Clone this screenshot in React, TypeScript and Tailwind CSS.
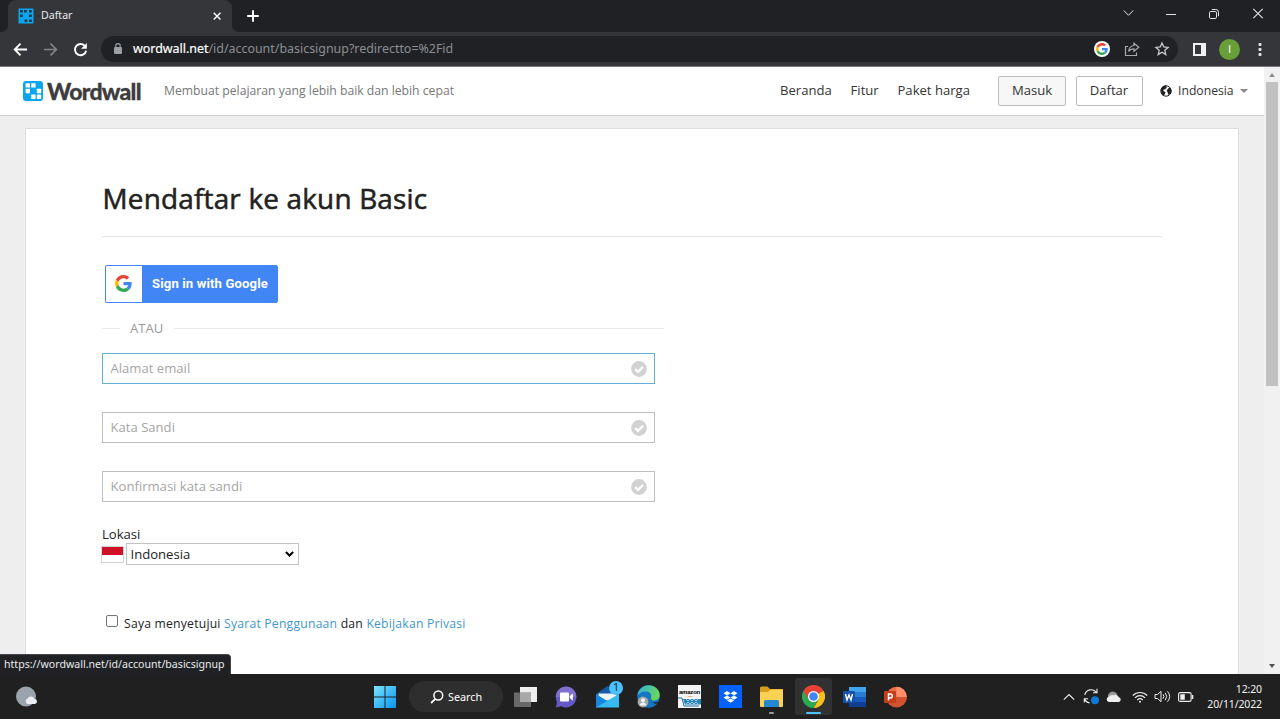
import { ReactNode } from 'react'

function Mark({ className, hole, round }: { className: string; hole: string; round: number }) {
  return (
    <svg className={className} viewBox="0 0 20 20">
      <rect width="20" height="20" rx={round} fill="#0aa5ec" />
      {[[2.6, 2.2], [8.2, 2.2], [2.6, 7.8], [13.8, 7.8], [8.2, 13.6], [13.8, 13.6]].map(([x, y], i) => (
        <rect key={i} x={x} y={y} width="4.4" height="4.4" rx=".4" fill={hole} />
      ))}
    </svg>
  )
}

function TabMark() {
  return (
    <svg className="size-4" viewBox="0 0 16 16">
      <path d="M.5.5h15v15H.5z" fill="#0aa5ec" />
      {[[2, 2], [6, 2], [11, 2], [2, 6.5], [11, 6.5], [6.5, 11.5], [11, 11.5]].map(([x, y], i) => (
        <rect key={i} x={x} y={y} width="2.8" height="2.5" fill="#263746" />
      ))}
    </svg>
  )
}

function GoogleG({ className }: { className: string }) {
  return (
    <svg className={className} viewBox="0 0 48 48">
      <path fill="#EA4335" d="M24 9.5c3.54 0 6.71 1.22 9.21 3.6l6.85-6.85C35.9 2.38 30.47 0 24 0 14.62 0 6.51 5.38 2.56 13.22l7.98 6.19C12.43 13.72 17.74 9.5 24 9.5z" />
      <path fill="#4285F4" d="M46.98 24.55c0-1.57-.15-3.09-.38-4.55H24v9.02h12.94c-.58 2.96-2.26 5.48-4.78 7.18l7.73 6c4.51-4.18 7.09-10.36 7.09-17.65z" />
      <path fill="#FBBC05" d="M10.53 28.59A14.5 14.5 0 0 1 9.77 24c0-1.6.27-3.14.76-4.59l-7.98-6.19A23.9 23.9 0 0 0 0 24c0 3.88.92 7.54 2.56 10.78l7.97-6.19z" />
      <path fill="#34A853" d="M24 48c6.48 0 11.93-2.13 15.89-5.81l-7.73-6c-2.15 1.45-4.92 2.3-8.16 2.3-6.26 0-11.57-4.22-13.47-9.91l-7.98 6.19C6.51 42.62 14.62 48 24 48z" />
    </svg>
  )
}

function Line({ className, box = '0 0 16 16', children }: { className: string; box?: string; children: ReactNode }) {
  return <svg className={`shrink-0 ${className}`} viewBox={box} fill="none" stroke="currentColor">{children}</svg>
}

function TabBar() {
  return (
    <div className="flex h-8 items-start bg-[#202124] text-white">
      <span className="h-8 w-2 bg-[#35363a]"><span className="block h-8 rounded-br-[7px] bg-[#202124]" /></span>
      <div className="flex h-8 w-[224px] items-center rounded-t-[8px] bg-[#35363a] pr-[9px] pl-[10px]">
        <TabMark />
        <span className="ml-[7px] grow font-['Noto_Sans',sans-serif] text-[10.6px] text-[#e8eaed]">Daftar</span>
        <Line className="size-3" box="0 0 12 12"><path d="M2.7 2.7l6.8 6.8M9.5 2.7L2.7 9.5" strokeWidth="1.4" /></Line>
      </div>
      <span className="h-8 w-2 bg-[#35363a]"><span className="block h-8 rounded-bl-[7px] bg-[#202124]" /></span>
      <Line className="ml-[7px] h-8 w-3" box="0 0 12 32"><path d="M6 10.2v11.6M.2 16h11.6" strokeWidth="1.9" /></Line>
      <div className="ml-auto flex h-[27px] items-center text-[#e4e4e4]">
        <Line className="mr-[31px] size-3" box="0 0 12 12"><path d="M.8 2.5L5.5 7.3l4.7-4.8" /></Line>
        <Line className="mr-[31px] size-3" box="0 0 12 12"><path d="M0 6.5h10" /></Line>
        <Line className="mr-[31px] size-3" box="0 0 12 12"><rect x=".5" y="3.5" width="7" height="7" rx="1.3" /><path d="M2.8 1.5h4a2.7 2.7 0 0 1 2.7 2.7v4" /></Line>
        <Line className="mr-4 size-3" box="0 0 12 12"><path d="M1.3 .8l9.4 9.4M10.7 .8l-9.4 9.4" strokeWidth="1.1" /></Line>
      </div>
    </div>
  )
}

function Toolbar() {
  return (
    <div className="flex h-[35px] items-center border-b border-[#77787b] bg-[#35363a] text-white">
      <Line className="ml-[13px] size-[15px]"><path d="M15 8H2M8 1.8L1.8 8 8 14.2" strokeWidth="2" /></Line>
      <Line className="ml-[15px] size-[15px] text-[#818387]"><path d="M1 8h13M8 1.8L14.2 8 8 14.2" strokeWidth="1.8" /></Line>
      <Line className="ml-[15px] size-[15px]"><path d="M13 4.6A6 6 0 1 0 14 9.4" strokeWidth="2" /><path d="M14.8 1v6.3H8.5z" fill="currentColor" stroke="none" /></Line>
      <div className="ml-[13px] flex h-[26px] w-[1077px] items-center rounded-full bg-[#202124] pr-[8px] pl-[13px]">
        <svg className="mb-px h-[11px] w-[8px]" viewBox="0 0 8 11"><rect y="4" width="8" height="7" rx="1" fill="#9aa0a6" /><path d="M1.8 4.5V2.8a2.2 2.2 0 0 1 4.4 0v1.7" fill="none" stroke="#9aa0a6" strokeWidth="1.2" /></svg>
        <p className="ml-[11px] grow font-['Noto_Sans',sans-serif] text-[12.43px] leading-[18px] text-[#8b8f94]"><span className="text-white [-webkit-text-stroke:0.2px_white]">wordwall.net</span>/id/account/basicsignup?redirectto=%2Fid</p>
        <span className="flex size-4 items-center justify-center rounded-full bg-white"><GoogleG className="size-3" /></span>
        <Line className="ml-[14px] size-4 text-[#a6a9ad]"><path d="M4 5.5H1.5v9h11v-3" strokeWidth="1.2" /><path d="M10 2.2L14.8 6.2 10 10.2V7.8c-2.6 0-4.2.8-5.4 2.6.3-3.2 2.2-5.5 5.4-5.9z" strokeWidth="1.2" /></Line>
        <Line className="ml-[14px] size-4 text-[#c8cacd]"><path d="M8 2l1.8 4 4.3.4-3.3 2.9 1 4.3L8 11.3l-3.8 2.3 1-4.3-3.3-2.9 4.3-.4z" strokeWidth="1.3" /></Line>
      </div>
      <svg className="ml-[15px] h-[13px] w-[13px]" viewBox="0 0 13 13"><rect width="13" height="13" fill="#f1f1f1" /><rect x="2" y="2" width="6" height="9" fill="#35363a" /></svg>
      <span className="ml-[13px] flex size-[21px] items-center justify-center rounded-full bg-[#689f38] font-['Roboto',sans-serif] text-[10px]">I</span>
      <svg className="ml-[18px] h-[13px] w-[4px]" viewBox="0 0 4 13" fill="#e4e4e4"><rect x=".5" y="0" width="3" height="3" rx="1" /><rect x=".5" y="5" width="3" height="3" rx="1" /><rect x=".5" y="10" width="3" height="3" rx="1" /></svg>
    </div>
  )
}

function SiteHeader() {
  return (
    <header className="flex h-[49px] shrink-0 items-center border-b border-[#cfcfcf] bg-white text-[13.1px] text-[#333]">
      <Mark className="ml-[23px] size-5" hole="#ffffff" round={3} />
      <span className="ml-[4px] w-[94px] font-['Lato',sans-serif] text-[23px] leading-6 font-black tracking-[-0.72px] text-[#3d3d3d] [-webkit-text-stroke:0.3px_#3d3d3d]">Wordwall</span>
      <span className="ml-[23px] text-[12.2px] text-[#777]">Membuat pelajaran yang lebih baik dan lebih cepat</span>
      <nav className="ml-auto flex w-[190px] justify-between whitespace-nowrap"><span>Beranda</span><span>Fitur</span><span>Paket harga</span></nav>
      <button className="ml-[28px] h-[30px] w-[68px] rounded-[2px] border border-[#bdbdbd] bg-[#f7f7f7]">Masuk</button>
      <button className="ml-[10px] h-[30px] w-[67px] rounded-[2px] border border-[#bdbdbd] bg-white pr-px">Daftar</button>
      <svg className="ml-[17px] size-3" viewBox="0 0 12 12"><circle cx="6" cy="6" r="5.2" fill="#fff" stroke="#222" /><path d="M.8 4L3 1l3-.5.8 2-1.5 1.7-2 .6.3 1.500 2 .8-.7 2-1.500 2L1.500 9zM8 3.500L10 2.500l1.500 3-.7 3L8.500 10 7.500 7 6.700 5.500z" fill="#222" /></svg>
      <span className="ml-[6px] w-[56px] text-[12.2px]">Indonesia</span>
      <svg className="mr-4 ml-[6px] h-1 w-2" viewBox="0 0 8 4"><path d="M0 0h8L4 4z" fill="#888" /></svg>
    </header>
  )
}

function Field({ label, active = false }: { label: string; active?: boolean }) {
  return (
    <div className={`flex h-[31px] w-[553px] items-center justify-between border bg-white pr-[7px] pl-[7.5px] ${active ? 'border-[#62b0d4]' : 'border-[#bfbfbf]'}`}>
      <span className="text-[13.1px] text-[#a6a6a6]">{label}</span>
      <svg className="size-4" viewBox="0 0 16 16"><circle cx="8" cy="8" r="7.9" fill="#d2d2d2" /><path d="M4.2 8.2l2.8 2.7 5-5" fill="none" stroke="#fff" strokeWidth="2.4" /></svg>
    </div>
  )
}

function SignupCard() {
  return (
    <main className="mt-[12px] ml-[25px] h-[560px] w-[1214px] border border-[#dedede] bg-white pl-[76px] text-[#222]">
      <h1 className="mt-[47px] h-[45px] pl-[0.5px] text-[27.9px] leading-[44px] tracking-[0.2px] text-[#222] [-webkit-text-stroke:0.55px_#222]">Mendaftar ke akun Basic</h1>
      <div className="mt-[15px] w-[1060px] border-t border-[#e6e6e6]" />
      <button className="mt-[28px] ml-[3px] flex h-[38px] w-[173px] items-center rounded-[2px] border border-[#4285f4] bg-[#4285f4]">
        <span className="flex h-[36px] w-[36px] items-center justify-center rounded-l-[1px] bg-white pr-px"><GoogleG className="mb-px size-[17px]" /></span>
        <span className="ml-[10px] font-['Roboto',sans-serif] text-[13.1px] font-bold tracking-[0.13px] whitespace-nowrap text-white">Sign in with Google</span>
      </button>
      <div className="mt-[15px] flex h-[20px] w-[562px] items-center text-[13.1px] text-[#999]">
        <span className="w-[18px] border-t border-[#e8e8e8]" /><span className="mx-[10px] w-[34px] pt-[2px]">ATAU</span><span className="grow border-t border-[#e8e8e8]" />
      </div>
      <div className="mt-[15px] flex flex-col gap-[28px]"><Field label="Alamat email" active /><Field label="Kata Sandi" /><Field label="Konfirmasi kata sandi" /></div>
      <div className="mt-[23px] h-[18px] text-[13.1px] leading-[18px]">Lokasi</div>
      <div className="flex items-center">
        <span className="-ml-px flex h-[17px] w-[23px] flex-col border border-[#d4d4d4] bg-white"><span className="h-[8px] bg-[#ce1126]" /></span>
        <span className="ml-[2px] flex h-[22px] w-[173px] items-center justify-between border border-[#c3c3c3] pr-[4px] pl-[3.5px] text-[13.1px]"><span className="pt-px">Indonesia</span>
          <Line className="h-[6px] w-[9px] text-black" box="0 0 9 6"><path d="M.9 1l3.6 3.5L8.1 1" strokeWidth="2" /></Line>
        </span>
      </div>
      <div className="mt-[48px] ml-[4px] flex h-[20px] items-center text-[12.2px] tracking-[0.21px]">
        <span className="mb-[4px] size-3 rounded-[2px] border border-[#767676]" />
        <p className="ml-[6px] pt-[2px]">Saya menyetujui <a className="text-[#3f97cf]">Syarat Penggunaan</a> dan <a className="text-[#3f97cf]">Kebijakan Privasi</a></p>
      </div>
    </main>
  )
}

function TaskIcons() {
  return (
    <div className="flex items-center">
      <svg className="size-[22px]" viewBox="0 0 22 22"><defs><linearGradient id="win" x2="1" y2="1"><stop stopColor="#7be3ff" /><stop offset="1" stopColor="#0795f0" /></linearGradient></defs><path d="M0 0h10.5v10.5H0zM11.5 0H22v10.5H11.5zM0 11.5h10.5V22H0zM11.5 11.5H22V22H11.5z" fill="url(#win)" /></svg>
      <div className="ml-[13px] flex h-[31px] w-[94px] items-center rounded-full bg-[#2e2e2e] pl-[21px] text-white">
        <Line className="size-[14px]" box="0 0 14 14"><circle cx="8.3" cy="5.5" r="4.4" strokeWidth="1.5" /><path d="M5.3 8.8L1.1 13" strokeWidth="1.8" /></Line>
        <span className="ml-1 pt-px font-['Noto_Sans',sans-serif] text-[10.8px]">Search</span>
      </div>
      <svg className="ml-[11px] h-[22px] w-[23px]" viewBox="0 0 23 22"><rect x="6" y="1" width="17" height="15" fill="#eee" /><rect y="6.5" width="17" height="14.5" fill="#777" fillOpacity=".85" /><path d="M6 6.5h11V16H6z" fill="#aaa" /></svg>
      <svg className="ml-[18px] size-[22px]" viewBox="0 0 22 22"><path d="M11 .5A10.5 10.5 0 1 1 6 20.3L.8 21.5 2 16A10.5 10.5 0 0 1 11 .5z" fill="#6459c6" /><path d="M11 .5A10.5 10.5 0 0 1 21.5 11H.8A10.2 10.2 0 0 1 11 .5" fill="#9480d8" opacity=".6" /><rect x="5" y="6.5" width="9" height="9" rx="1" fill="#fff" /><path d="M14.8 10l3-2.7v7.4l-3-2.7z" fill="#fff" /></svg>
      <div className="relative ml-[19px] h-[22px] w-[23px]">
        <svg className="h-[22px] w-[23px]" viewBox="0 0 23 22"><path d="M0 8L11.5 0 23 8v13H0z" fill="#125ba6" /><path d="M2.5 7.5h18v7h-18z" fill="#eef6ff" /><path d="M0 8l12 7.5L0 22z" fill="#1688db" /><path d="M23 8L0 21.5h23z" fill="#37b8f0" /></svg>
        <span className="absolute top-[-5px] left-[13px] flex size-[14px] items-center justify-center rounded-full bg-[#4cc2ff] font-['Roboto',sans-serif] text-[10px] text-[#123]">1</span>
      </div>
      <svg className="ml-[18px] size-[23px]" viewBox="0 0 23 23"><defs><linearGradient id="edge" x2="1" y2=".3"><stop stopColor="#2daee6" /><stop offset="1" stopColor="#68d85b" /></linearGradient></defs><circle cx="11.5" cy="11.5" r="11.2" fill="#1676c4" /><path d="M.4 11C1 4.5 6 .3 11.5.3 18 .3 22.7 5 22.7 10c0 4-3 5.5-6 5.5-3.2 0-3.6-1.5-2.7-3C15 8.5 12 6.5 9 6.5 5 6.5 1.5 8.5.4 11z" fill="url(#edge)" /><path d="M14 12.5c-1 3 2 6 7.4 4.3L23 14v4h-2c-3 2-7-1-7-5.5z" fill="#202020" /><circle cx="6" cy="17" r="5.4" fill="#a8a8a8" /><circle cx="6" cy="15.3" r="2" fill="#f6f6f6" /><path d="M2.7 20.5c0-4 6.6-4 6.6 0z" fill="#f6f6f6" /></svg>
      <div className="ml-[18px] h-[23px] w-[23px] overflow-hidden bg-[#f4f4f4] text-center font-['Liberation_Sans',sans-serif] text-[6px] leading-[14px] font-bold tracking-[-0.2px] text-black">
        amazon
        <svg className="-mt-[3px] h-[12px] w-[23px]" viewBox="0 0 23 12"><path d="M6-1q6 3 12 0" stroke="#e9a463" fill="none" /><path d="M0 2h4l2 8h15" fill="none" stroke="#176fa5" /><path d="M5 3h18v5.500H7z" fill="#2684b7" /><path d="M8 3l2 2 2-2 2 2 2-2 2 2 2-2M8 8l2-2 2 2 2-2 2 2 2-2 2 2" fill="none" stroke="#d6edfa" strokeWidth=".7" /></svg>
      </div>
      <svg className="ml-[18px] size-[23px]" viewBox="0 0 23 23"><path d="M0 0h23v23H0z" fill="#0061ff" /><path d="M8 6l3.5 2.2L8 10.4 4.5 8.2zM15 6l3.5 2.2-3.5 2.2-3.5-2.2zM8 10.4l3.5 2.2L8 14.8l-3.5-2.2zM15 10.4l3.5 2.2-3.5 2.2-3.5-2.2zM11.500 13.400l3.500 2.200-3.500 2.200L8 15.600z" fill="#fff" /></svg>
      <div className="relative ml-[18px] size-[23px]">
        <svg className="size-[23px]" viewBox="0 0 23 23"><path d="M0 3a1.5 1.5 0 0 1 1.5-1.5h6L10 4H22a1 1 0 0 1 1 1v6H0z" fill="#d99c1b" /><path d="M0 7h8l2.5-2.5H23V21a1 1 0 0 1-1 1H1a1 1 0 0 1-1-1z" fill="#fbd253" /><path d="M4 22v-5.5a1.5 1.5 0 0 1 1.5-1.5h12a1.5 1.5 0 0 1 1.5 1.5V22z" fill="#2487cf" /></svg>
        <span className="absolute top-[27px] left-[9px] h-[2px] w-[5px] rounded-full bg-[#999]" />
      </div>
      <div className="relative ml-[12px] flex h-[37px] w-[37px] items-center justify-center rounded-[3px] bg-[#303132]">
        <svg className="size-[23px]" viewBox="0 0 24 24"><path d="M12 12L1.6 6A12 12 0 0 1 22.4 6z" fill="#e94235" /><path d="M12 12L22.4 6A12 12 0 0 1 12 24l5.2-9z" fill="#fbc116" /><path d="M12 12l5.2 3L12 24A12 12 0 0 1 1.6 6z" fill="#2da94f" /><path d="M12 6.5h10.6L22.4 6H1.6l5.2 9z" fill="#e94235" /><circle cx="12" cy="12" r="5.8" fill="#fff" /><circle cx="12" cy="12" r="4.5" fill="#4285f4" /></svg>
        <span className="absolute bottom-[1px] left-[11px] h-[2px] w-[15px] rounded-full bg-[#4cc2ff]" />
      </div>
      <svg className="ml-[11px] h-[22px] w-[23px]" viewBox="0 0 23 22"><path d="M6 1h17v5H6z" fill="#41a5ee" /><path d="M6 6h17v5H6z" fill="#2b7cd3" /><path d="M6 11h17v5H6z" fill="#185abd" /><path d="M6 16h17v5H6z" fill="#103f91" /><rect y="5" width="12" height="12" rx="1" fill="#1551a9" /><path d="M2.5 8l1.5 6L6 9l2 5 1.5-6" fill="none" stroke="#fff" strokeWidth="1.4" /></svg>
      <svg className="ml-[18px] h-[22px] w-[23px]" viewBox="0 0 23 22"><circle cx="12.5" cy="11" r="10.3" fill="#ed6c47" /><path d="M12.5.7A10.3 10.3 0 0 1 22.8 11H12.5z" fill="#ff8f6b" /><path d="M2.2 11h20.6a10.3 10.3 0 0 1-20.6 0" fill="#d35230" /><rect y="5" width="12" height="12" rx="1" fill="#c43e1c" /><path d="M4.5 14.5V8H6.3a1.9 1.9 0 0 1 0 4H4.5" fill="none" stroke="#fff" strokeWidth="1.5" /></svg>
    </div>
  )
}

function Taskbar() {
  return (
    <footer className="flex h-[45px] shrink-0 items-center bg-[#202020] text-[#f0f0f0]">
      <svg className="ml-4 size-[22px]" viewBox="0 0 22 22"><circle cx="10" cy="10.5" r="10" fill="#9ba3ad" /><path d="M11.5 18a3 3 0 0 1 0-5.5 4 4 0 0 1 7 .2 2.7 2.7 0 0 1 .5 5.3z" fill="#e9edf2" /></svg>
      <div className="ml-[336px]"><TaskIcons /></div>
      <div className="mr-[18px] ml-auto flex items-center">
        <Line className="h-3 w-3" box="0 0 12 12"><path d="M.8 8.7L6 3.5l5.2 5.2" strokeWidth="1.1" /></Line>
        <svg className="ml-[8px] size-[17px]" viewBox="0 0 17 17" fill="none" stroke="#eee" strokeWidth="1.1"><path d="M1.8 7A6.5 6.5 0 0 1 13.5 4.5M14 .8v4h-4M1.3 14.5v-3.8h3.8M1.6 11a6.5 6.5 0 0 0 5 4" /><circle cx="12" cy="12.3" r="4" fill="#0b7ad8" stroke="none" /></svg>
        <svg className="ml-[6px] h-[11px] w-4" viewBox="0 0 16 11"><path d="M2.5 7a4 4 0 0 1 1-5 5 5 0 0 1 8 1.5z" fill="#999" /><path d="M2.8 11a2.7 2.7 0 0 1 0-5.3 4.5 4.5 0 0 1 4.5-1.500 4 4 0 0 1 5.500 2A2.500 2.500 0 0 1 13 11z" fill="#eee" /></svg>
        <svg className="ml-[10px] h-[12px] w-4" viewBox="0 0 16 12" fill="none" stroke="#eee" strokeWidth="1.2"><path d="M.8 4.5a10.2 10.2 0 0 1 14.4 0M3 6.8a7 7 0 0 1 10 0M5.3 9a3.9 3.9 0 0 1 5.4 0" /><circle cx="8" cy="10.7" r="1" fill="#eee" stroke="none" /></svg>
        <svg className="ml-[6px] h-[13px] w-[17px]" viewBox="0 0 17 13" fill="none" stroke="#eee"><path d="M1 4.5h2.5L7 1.3v10.4L3.5 8.5H1zM9 4.3q1.8 2.2 0 4.4M11.2 2.8q3 3.7 0 7.4M13.5 1.3q4.3 5.2 0 10.4" /></svg>
        <svg className="ml-[7px] h-[10px] w-[16px]" viewBox="0 0 16 10"><rect x=".6" y=".6" width="12.5" height="8.8" rx="1.5" fill="none" stroke="#eee" strokeWidth="1.1" /><path d="M2.3 2.3h4.5v5.4H2.3zM13.8 3h1.5v4h-1.5z" fill="#eee" /></svg>
        <div className="ml-[12px] flex w-[56px] flex-col items-end font-['Noto_Sans',sans-serif] text-[10.5px] leading-[15px] tracking-[-0.12px] whitespace-nowrap"><div>12:20</div><div>20/11/2022</div></div>
      </div>
    </footer>
  )
}

export default function App() {
  return (
    <div className="relative flex h-[719px] w-[1280px] flex-col overflow-hidden bg-[#eee] font-['Open_Sans',sans-serif]">
      <TabBar />
      <Toolbar />
      <div className="flex h-[607px] shrink-0">
        <div className="h-[607px] w-[1264px] overflow-hidden bg-[#eee]"><SiteHeader /><SignupCard /></div>
        <div className="flex w-4 flex-col items-center bg-[#f1f1f1]">
          <svg className="mt-[6px] h-[4px] w-[6px]" viewBox="0 0 6 4"><path d="M0 4h6L3 0z" fill="#8c8c8c" /></svg>
          <span className="mt-[5px] h-[304px] w-[12px] bg-[#c1c1c1]" />
          <svg className="mt-auto mb-[6px] h-[4px] w-[6px]" viewBox="0 0 6 4"><path d="M0 0h6L3 4z" fill="#505050" /></svg>
        </div>
      </div>
      <Taskbar />
      <div className="absolute top-[654px] left-0 flex h-[20px] w-[231px] items-center rounded-tr-[4px] border-t border-r border-[#45464a] bg-[#202124] pt-px pl-[4px] font-['Noto_Sans',sans-serif] text-[10.6px] text-[#e8eaed]">https://wordwall.net/id/account/basicsignup</div>
    </div>
  )
}
